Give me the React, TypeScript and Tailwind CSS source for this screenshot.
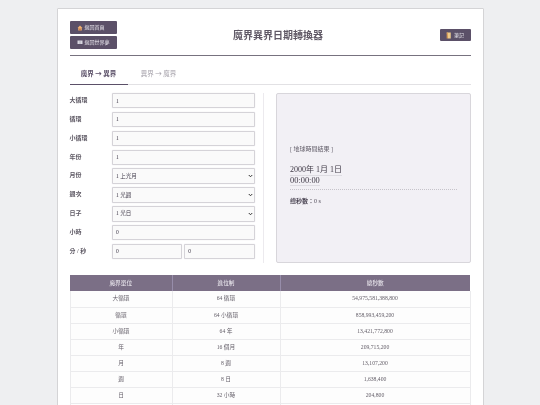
import React from 'react';

const SANS = 'font-["Noto_Sans_CJK_TC","Liberation_Serif",sans-serif]';
const MIXED = 'font-["Liberation_Serif","Noto_Sans_CJK_TC",serif]';

const RULES: [string, string, string][] = [
  ['大循環', '64 循環', '54,975,581,388,800'],
  ['循環', '64 小循環', '858,993,459,200'],
  ['小循環', '64 年', '13,421,772,800'],
  ['年', '16 個月', '209,715,200'],
  ['月', '8 週', '13,107,200'],
  ['週', '8 日', '1,638,400'],
  ['日', '32 小時', '204,800'],
];

const fieldClass =
  'min-w-0 w-full rounded-[1px] border border-[#d5d3d8] bg-[#fafafa] px-[3px] text-[5.5px] text-[#3c3646] shadow-[0_0_1px_#d5d3d8]';

// Small emoji-like icons used on the header buttons
const HomeIcon = () => (
  <svg width="6" height="6" viewBox="0 0 12 12">
    <path d="M6 1 L11 6 H9.5 V11 H2.5 V6 H1 Z" fill="#f0b070" />
    <rect x="5" y="7" width="2" height="4" fill="#a8502c" />
  </svg>
);

const BookIcon = () => (
  <svg width="6" height="6" viewBox="0 0 12 12">
    <path d="M1 3 H11 V10 H1 Z" fill="#d8d6e0" />
    <path d="M6 3 V10" stroke="#8d8899" strokeWidth="1" />
  </svg>
);

const NoteIcon = () => (
  <svg width="6" height="7" viewBox="0 0 10 12">
    <path d="M1 1 H8 V11 H3 Z" fill="#eecb8c" />
    <path d="M1 1 H3 V11 H1 Z" fill="#d99a50" />
  </svg>
);

const HeaderButton = ({ icon, label, className = '' }: { icon: React.ReactNode; label: string; className?: string }) => (
  <button className={`flex h-[12.6px] items-center gap-[2px] rounded-[1px] bg-[#5b5068] text-[5px] leading-none text-[#eceaf0] ${className}`}>
    {icon}
    <span>{label}</span>
  </button>
);

const Field = ({ label, children }: { label: string; children: React.ReactNode }) => (
  <div className="flex h-[15px] items-center">
    <label className="w-[42.5px] shrink-0 text-[6px] font-bold text-[#5d5863]">{label}</label>
    <div className="flex min-w-0 flex-1 gap-[2px]">{children}</div>
  </div>
);

const Input = ({ value }: { value: string }) => <input readOnly value={value} className={`${fieldClass} h-[15px]`} />;

const Select = ({ value }: { value: string }) => (
  <div className="relative w-full">
    <select defaultValue={value} className={`${fieldClass} block h-[16px] appearance-none`}>
      <option>{value}</option>
    </select>
    {/* chevron drawn over the select, native arrow does not scale down */}
    <svg width="5" height="4" viewBox="0 0 10 8" className="absolute right-[1.5px] top-[6px]">
      <path d="M1.5 2 L5 5.5 L8.5 2" fill="none" stroke="#333" strokeWidth="2" />
    </svg>
  </div>
);

export default function App() {
  return (
    <div className={`h-[405px] overflow-hidden bg-[#eeeff1] pt-[8px] blur-[0.4px] ${MIXED}`}>
      <div className="mx-auto w-[427px] rounded-t-[1px] border border-[#d4d4d6] bg-white px-[12px] pt-[12px]">
        {/* HEADER */}
        <header className="flex h-[35px] items-center justify-between border-b border-[#77727f] pb-[6px]">
          <div className="flex w-[47px] flex-col gap-[2px]">
            <HeaderButton icon={<HomeIcon />} label="返回首頁" className="pl-[7px]" />
            <HeaderButton icon={<BookIcon />} label="返回世界夢" className="pl-[7px]" />
          </div>
          <h1 className={`text-[10px] font-bold leading-none text-[#5f5865] ${SANS}`}>魔界異界日期轉換器</h1>
          <HeaderButton icon={<NoteIcon />} label="筆記" className="w-[31px] justify-center" />
        </header>

        {/* TABS */}
        <nav className={`mt-[7px] flex h-[22px] border-b border-[#e2e1e4] text-[6.5px] ${SANS}`}>
          <div className="flex h-[22px] w-[58px] items-center justify-center border-b border-[#5b5068] font-bold text-[#5b5068]">魔界 → 異界</div>
          <div className="ml-[2px] flex w-[58px] items-center justify-center text-[#a5a1aa]">異界 → 魔界</div>
        </nav>

        {/* CONVERTER */}
        <section className="mt-[8px] flex h-[170px]">
          <div className="flex w-[185px] shrink-0 flex-col gap-[3.85px]">
            <Field label="大循環"><Input value="1" /></Field>
            <Field label="循環"><Input value="1" /></Field>
            <Field label="小循環"><Input value="1" /></Field>
            <Field label="年份"><Input value="1" /></Field>
            <Field label="月份"><Select value="1 上光月" /></Field>
            <Field label="週次"><Select value="1 光週" /></Field>
            <Field label="日子"><Select value="1 光日" /></Field>
            <Field label="小時"><Input value="0" /></Field>
            <Field label="分 / 秒"><Input value="0" /><Input value="0" /></Field>
          </div>
          <div className="ml-[8px] w-px bg-[#eceaee]" />
          <div className="ml-[12.5px] flex flex-1 flex-col rounded-[2px] border border-[#d8d6db] bg-[#f2f0f5] px-[13px] pt-[52px]">
            <div className="text-[6px] leading-none text-[#5f5a66]">[ 地球時間結果 ]</div>
            <div className="mt-[13px] flex flex-col items-start leading-[9.5px] text-[#3f3946]">
              <span className="border-b border-[#dedce2] text-[8px]">2000年 1月 1日</span>
              <span className="border-b border-[#dedce2] text-[8.4px]">00:00:00</span>
            </div>
            <div className="mt-[3px] border-t border-dotted border-[#c6c3ca]" />
            <div className="mt-[8px] text-[6px] leading-none text-[#4d4755]"><b>總秒數：</b>0 s</div>
          </div>
        </section>

        {/* RULE TABLE */}
        <table className="mt-[12px] w-full table-fixed border-collapse text-[5.7px] text-[#66616b]">
          <colgroup>
            <col className="w-[102px]" />
            <col className="w-[108px]" />
            <col />
          </colgroup>
          <thead>
            <tr className="h-[16px] bg-[#7b6f86] text-[#f2f0f5]">
              {['魔界單位', '進位制', '總秒數'].map((h) => (
                <th key={h} className="border-x border-[#978daa] font-normal first:border-l-0 last:border-r-0">{h}</th>
              ))}
            </tr>
          </thead>
          <tbody>
            {RULES.map(([unit, base, seconds]) => (
              <tr key={unit} className="h-[16px] border-b border-[#ebebed] bg-[#fdfdfd] text-center">
                <td className="border-x border-[#ebebed]">{unit}</td>
                <td className="border-x border-[#ebebed]">{base}</td>
                <td className="border-x border-[#ebebed]">{seconds}</td>
              </tr>
            ))}
            {/* next row starts right at the fold, only its cell borders show */}
            <tr className="h-[16px]">
              <td className="border-x border-[#ebebed]" />
              <td className="border-x border-[#ebebed]" />
              <td className="border-x border-[#ebebed]" />
            </tr>
          </tbody>
        </table>
      </div>
    </div>
  );
}
